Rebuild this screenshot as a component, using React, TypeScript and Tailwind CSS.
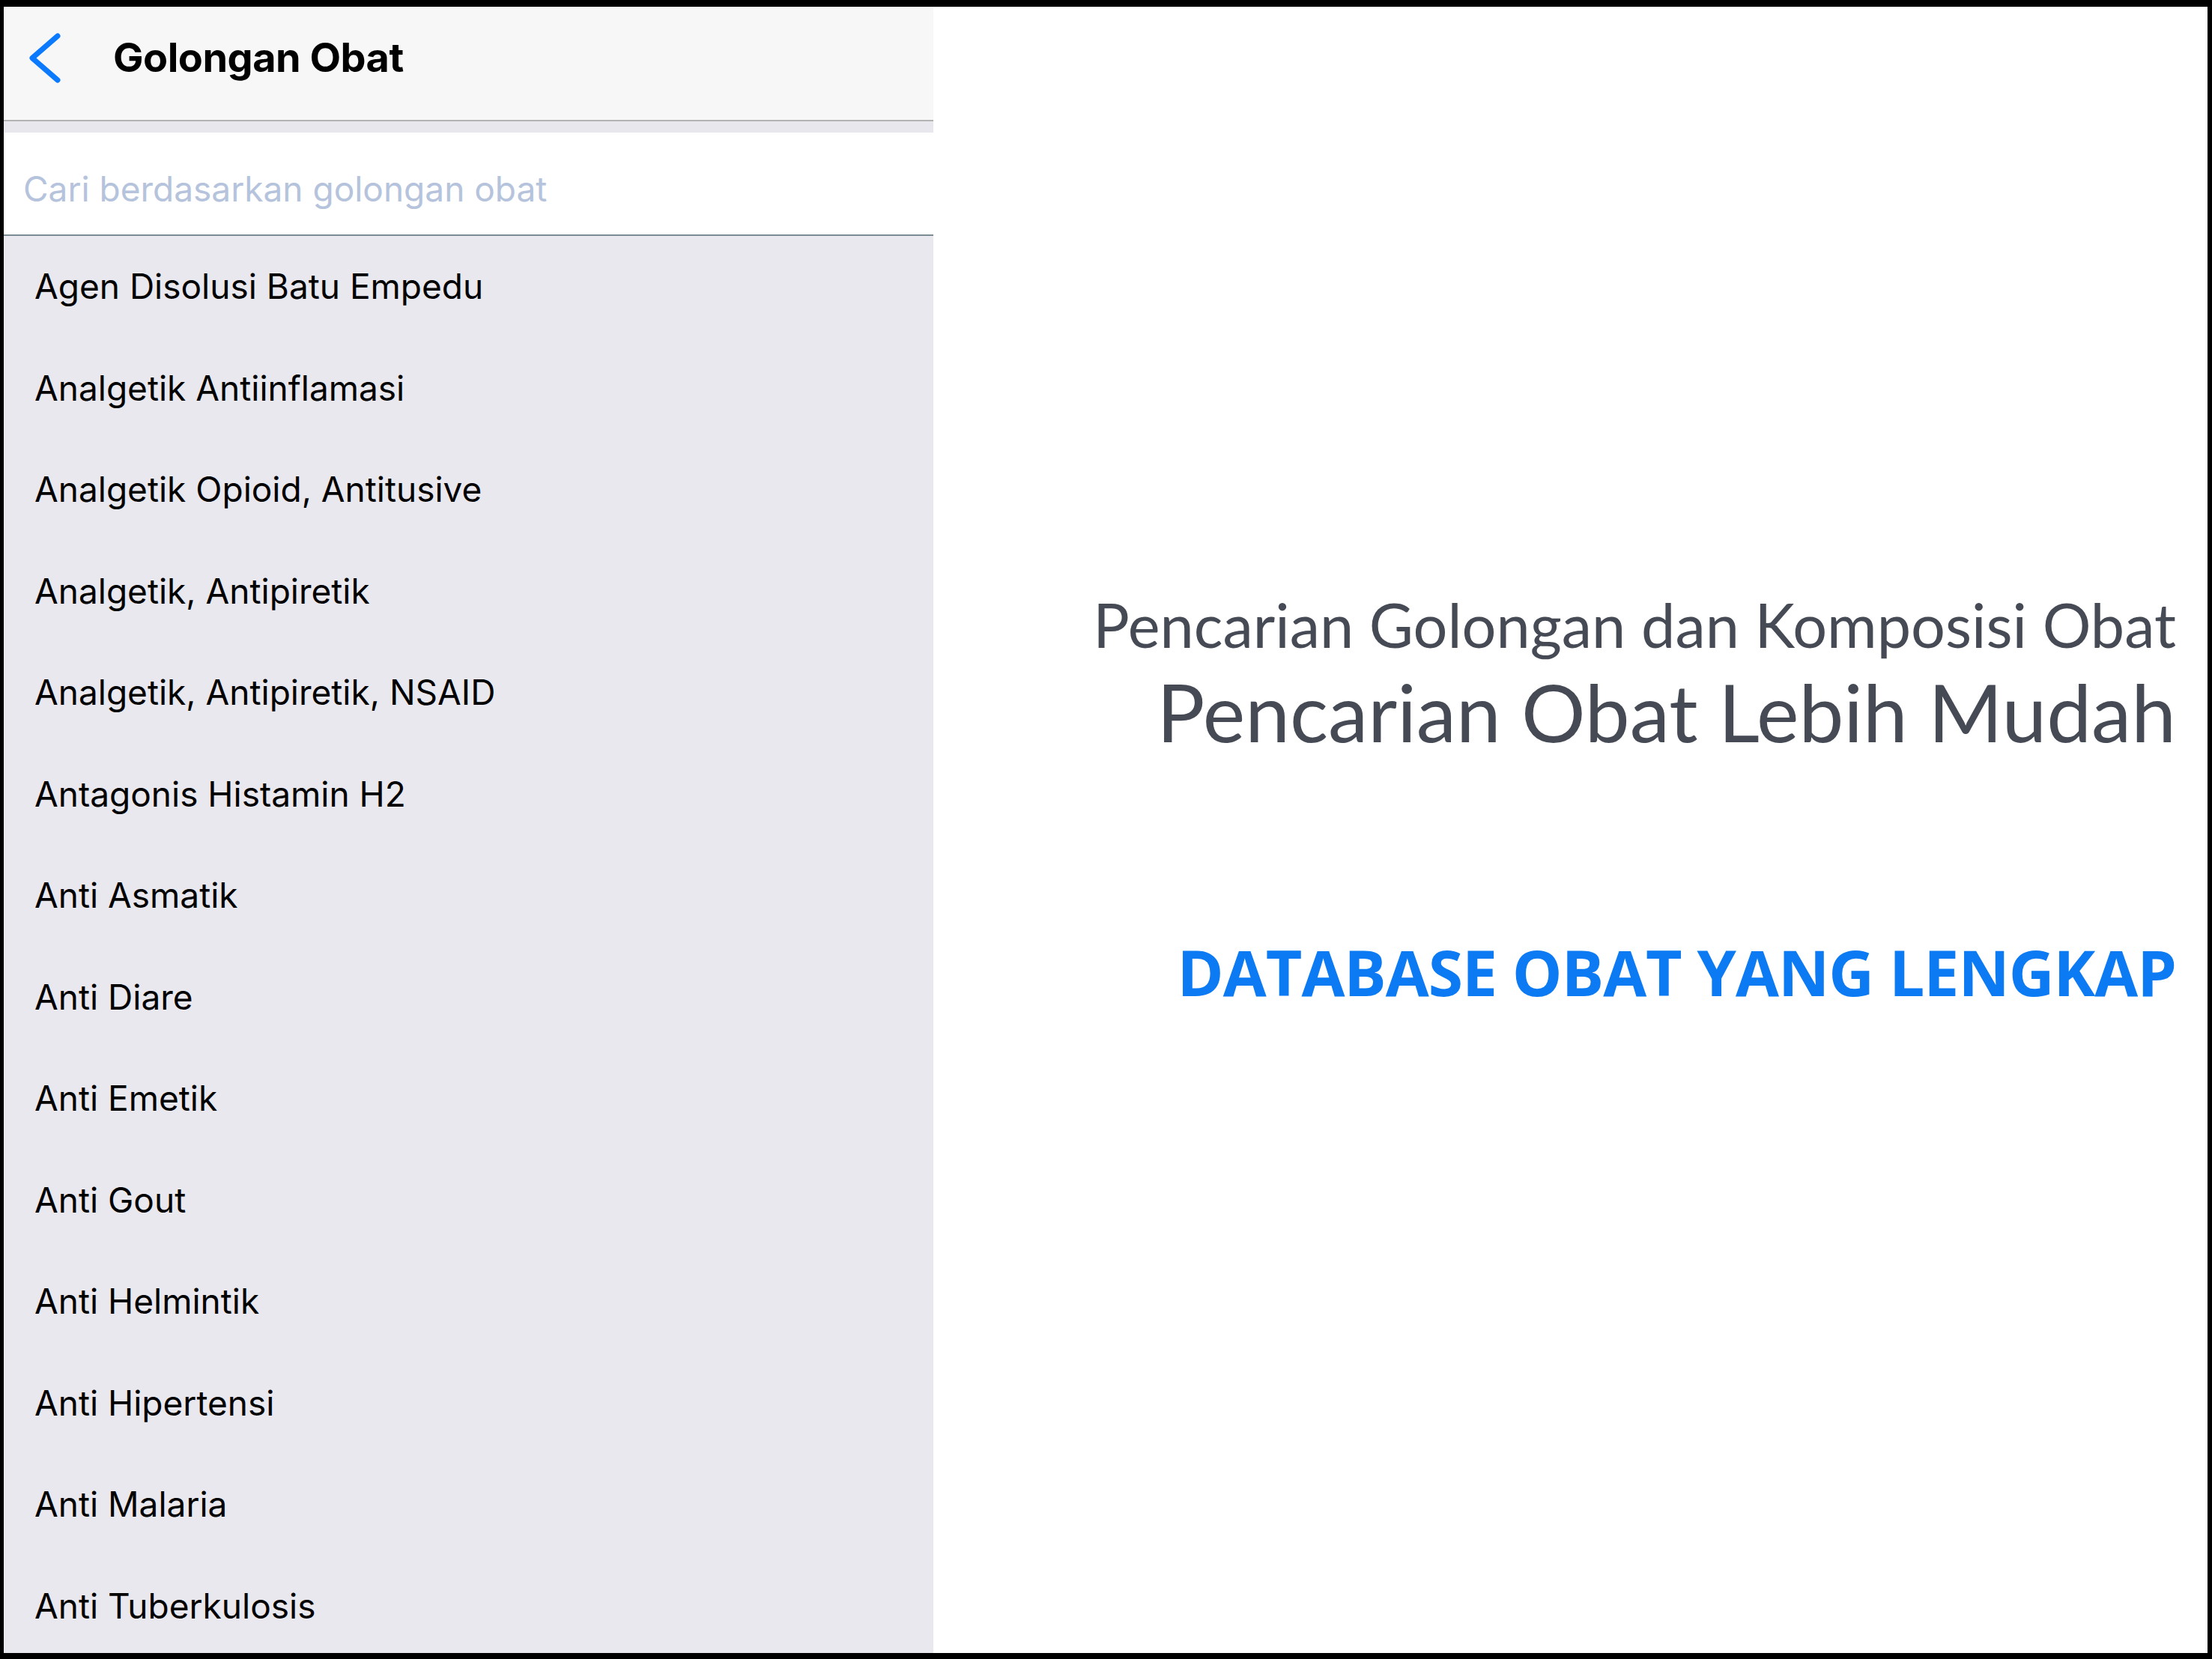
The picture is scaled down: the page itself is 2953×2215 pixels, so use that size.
import React from 'react';

const golongan = [
  'Agen Disolusi Batu Empedu',
  'Analgetik Antiinflamasi',
  'Analgetik Opioid, Antitusive',
  'Analgetik, Antipiretik',
  'Analgetik, Antipiretik, NSAID',
  'Antagonis Histamin H2',
  'Anti Asmatik',
  'Anti Diare',
  'Anti Emetik',
  'Anti Gout',
  'Anti Helmintik',
  'Anti Hipertensi',
  'Anti Malaria',
  'Anti Tuberkulosis',
];

const ios = { fontFamily: 'Inter, Roboto, "Liberation Sans", sans-serif' };
const avenir = { fontFamily: 'Lato, "Open Sans", "Liberation Sans", sans-serif' };

export default function App() {
  return (
    <div className="w-[2953px] h-[2215px] bg-black pt-[9px] pl-[5px] pr-[6px] pb-[8px] overflow-hidden">
      <div className="flex h-full w-full">
        {/* Left: list panel */}
        <div className="w-[1241px] flex flex-col bg-[#e9e8ee] overflow-hidden" style={ios}>
          {/* Nav bar */}
          <div className="h-[153px] shrink-0 bg-[#f7f7f7] border-b-2 border-[#b3b3b3] flex items-start">
            <svg width="60" height="90" viewBox="0 0 60 90" className="ml-[26px] mt-[24px] shrink-0">
              <polyline
                points="46,15 12,44.5 46,74"
                fill="none"
                stroke="#0b7aff"
                strokeWidth="7"
                strokeLinecap="round"
                strokeLinejoin="round"
              />
            </svg>
            <h1 className="ml-[60px] mt-[41px] text-[54px] leading-none font-bold text-black tracking-[-0.5px]">
              Golongan Obat
            </h1>
          </div>

          {/* gap band */}
          <div className="h-[15px] shrink-0 bg-[#e8e7ee]" />

          {/* Search */}
          <div className="h-[138px] shrink-0 bg-white border-b-2 border-[#7b8c94] flex items-center pl-[26px]">
            <input
              placeholder="Cari berdasarkan golongan obat"
              className="w-full bg-transparent outline-none text-[46px] mt-[14px] placeholder:text-[#b5c3dc] text-black"
              style={ios}
            />
          </div>

          {/* List */}
          <ul className="flex-1 overflow-hidden">
            {golongan.map((g) => (
              <li key={g} className="h-[135.5px] flex items-center pl-[41px] text-[46px] text-black">
                {g}
              </li>
            ))}
          </ul>
        </div>

        {/* Right: promo panel */}
        <div className="flex-1 bg-white flex flex-col items-end pr-[42px] pt-[784px]">
          <p className="text-[81px] leading-none text-[#454a55]" style={avenir}>
            Pencarian Golongan dan Komposisi Obat
          </p>
          <p className="mt-[22px] text-[107px] leading-none text-[#454a55]" style={avenir}>
            Pencarian Obat Lebih Mudah
          </p>
          <p
            className="mt-[253px] text-[84px] leading-none font-bold text-[#0c7bf3] tracking-[-1px]"
            style={{ fontFamily: '"Open Sans", "Noto Sans", sans-serif' }}
          >
            DATABASE OBAT YANG LENGKAP
          </p>
        </div>
      </div>
    </div>
  );
}
